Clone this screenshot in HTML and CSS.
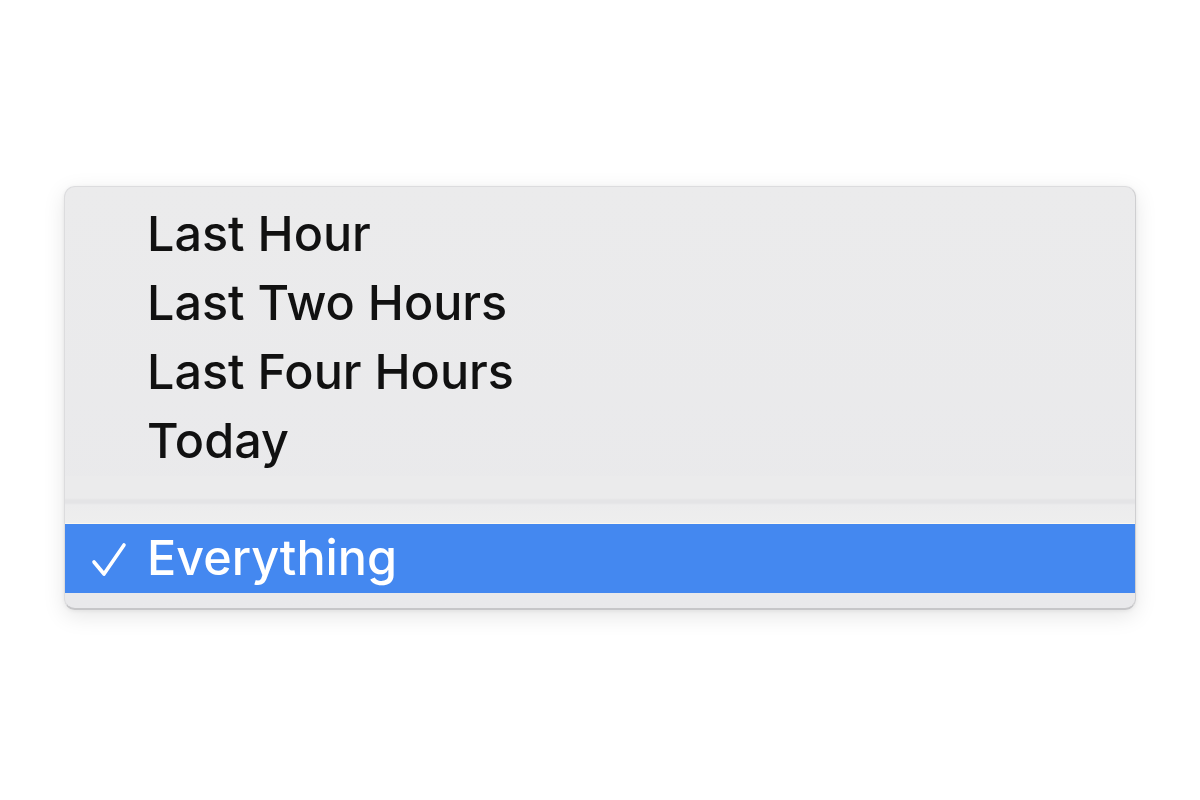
FILE: index.html
```html
<!DOCTYPE html>
<html>
<head>
<meta charset="utf-8">
<link rel="stylesheet" href="styles.css">
</head>
<body>
<div class="stage">
  <div class="menu">
    <div class="item"><span class="check"></span><span class="label">Last Hour</span></div>
    <div class="item"><span class="check"></span><span class="label">Last Two Hours</span></div>
    <div class="item"><span class="check"></span><span class="label">Last Four Hours</span></div>
    <div class="item"><span class="check"></span><span class="label">Today</span></div>
    <div class="sep"></div>
    <div class="item selected">
      <span class="check"><svg class="tick" width="36" height="36" viewBox="0 0 36 36"><path d="M3 20 L13 32 L33 3" fill="none" stroke="#ffffff" stroke-width="3.6" stroke-linecap="round" stroke-linejoin="round"/></svg></span>
      <span class="label">Everything</span>
    </div>
  </div>
</div>
</body>
</html>
```
FILE: styles.css
```css
html, body {
  margin: 0;
  padding: 0;
  background: #ffffff;
}
.stage {
  width: 1200px;
  height: 800px;
  padding-top: 186px;
  padding-left: 64px;
  box-sizing: border-box;
}
.menu {
  width: 1072px;
  height: 424px;
  box-sizing: border-box;
  background: linear-gradient(180deg, #ebebec 0%, #e9e9eb 100%);
  border-radius: 11px;
  border: 1px solid #dcdcde;
  border-bottom: 2px solid #c6c6c8;
  border-right-color: #cfcfd1;
  box-shadow: 0 6px 22px rgba(0,0,0,0.10), 0 1px 4px rgba(0,0,0,0.06);
  padding-top: 13px;
  overflow: hidden;
  font-family: Inter, "Noto Sans", "Liberation Sans", sans-serif;
}
.item {
  display: flex;
  align-items: center;
  height: 69px;
  color: #111111;
  font-size: 48.5px;
  font-weight: 500;
  letter-spacing: 0;
}
.check {
  width: 82px;
  flex: none;
  display: flex;
  justify-content: flex-start;
  align-items: center;
  padding-left: 26px;
  box-sizing: border-box;
}
.tick {
  display: block;
  margin-top: 2px;
}
.label {
  line-height: 1;
}
.sep {
  height: 47px;
  background: linear-gradient(180deg, #ebebec 0px, #ebebec 22px, #e4e4e6 24px, #e4e4e6 27px, #ececed 29px, #eeeeee 100%);
}
.selected {
  height: 70px;
  background: #4488f0;
  color: #ffffff;
  border-top: 1px solid #fbf8f0;
  box-sizing: border-box;
}
```
